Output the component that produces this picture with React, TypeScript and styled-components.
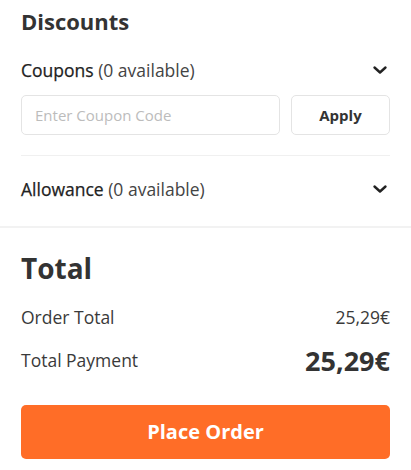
import React from "react";
import styled, { createGlobalStyle } from "styled-components";

const Global = createGlobalStyle`
  html, body { margin: 0; padding: 0; background: #fff; }
  body { font-family: "Open Sans", "Noto Sans", sans-serif; color: #333; }
  * { box-sizing: border-box; }
`;

const Page = styled.div`
  width: 411px;
  background: #fff;
`;

const Section = styled.section<{ $top: number; $bottom: number }>`
  padding: ${(p) => p.$top}px 21px ${(p) => p.$bottom}px;
`;

const Heading = styled.h2<{ $size: number }>`
  margin: 0;
  font-size: ${(p) => p.$size}px;
  font-weight: 700;
  line-height: 1.3;
  color: #333;
`;

const AccordionRow = styled.div<{ $mt?: number }>`
  display: flex;
  align-items: center;
  justify-content: space-between;
  height: 28px;
  margin-top: ${(p) => p.$mt ?? 0}px;
  cursor: pointer;
`;

const RowLabel = styled.div`
  font-size: 17.5px;
  color: #222;
  font-weight: 400;
  -webkit-text-stroke: 0.25px #222;
  span {
    -webkit-text-stroke: 0;
    color: #444;
  }
`;

const Chevron = styled.svg`
  width: 16px;
  height: 16px;
  margin-right: 2px;
`;

const CouponForm = styled.div`
  display: flex;
  gap: 11px;
  margin-top: 11px;
`;

const CouponInput = styled.input`
  flex: 1;
  min-width: 0;
  height: 40px;
  border: 1px solid #e4e4e4;
  border-radius: 5px;
  padding: 0 13px;
  font-family: inherit;
  font-size: 15px;
  color: #333;
  outline: none;
  &::placeholder { color: #bcbcbc; }
`;

const ApplyButton = styled.button`
  width: 99px;
  height: 40px;
  border: 1px solid #e4e4e4;
  border-radius: 5px;
  background: #fff;
  font-family: inherit;
  font-size: 15px;
  font-weight: 700;
  color: #333;
`;

const InnerDivider = styled.hr`
  border: 0;
  border-top: 1px solid #f0f0f0;
  margin: 20px 0 19px;
`;

const SectionDivider = styled.div`
  height: 2px;
  background: #f2f2f2;
`;

const TotalRow = styled.div<{ $mt: number }>`
  display: flex;
  align-items: center;
  justify-content: space-between;
  margin-top: ${(p) => p.$mt}px;
`;

const TotalLabel = styled.span`
  font-size: 17.5px;
  font-weight: 400;
  color: #3a3a3a;
`;

const TotalValue = styled.span<{ $big?: boolean }>`
  font-size: ${(p) => (p.$big ? 27 : 17.5)}px;
  font-weight: ${(p) => (p.$big ? 700 : 400)};
  color: ${(p) => (p.$big ? "#333" : "#3a3a3a")};
`;

const PlaceOrder = styled.button`
  width: 100%;
  height: 54px;
  margin-top: 26px;
  border: 0;
  border-radius: 5px;
  background: #ff6d27;
  color: #fff;
  font-family: inherit;
  font-size: 20px;
  font-weight: 700;
`;

const ChevronIcon = () => (
  <Chevron viewBox="0 0 16 16" fill="none">
    <path d="M2.5 5.5 L8 10.5 L13.5 5.5" stroke="#222" strokeWidth="2.4" strokeLinecap="round" strokeLinejoin="round" />
  </Chevron>
);

export default function App() {
  return (
    <Page>
      <Global />
      <Section $top={7} $bottom={23}>
        <Heading $size={22}>Discounts</Heading>
        <AccordionRow $mt={20}>
          <RowLabel>
            Coupons <span>(0 available)</span>
          </RowLabel>
          <ChevronIcon />
        </AccordionRow>
        <CouponForm>
          <CouponInput placeholder="Enter Coupon Code" />
          <ApplyButton>Apply</ApplyButton>
        </CouponForm>
        <InnerDivider />
        <AccordionRow>
          <RowLabel>
            Allowance <span>(0 available)</span>
          </RowLabel>
          <ChevronIcon />
        </AccordionRow>
      </Section>
      <SectionDivider />
      <Section $top={22} $bottom={10}>
        <Heading $size={28}>Total</Heading>
        <TotalRow $mt={19}>
          <TotalLabel>Order Total</TotalLabel>
          <TotalValue>25,29€</TotalValue>
        </TotalRow>
        <TotalRow $mt={13}>
          <TotalLabel>Total Payment</TotalLabel>
          <TotalValue $big>25,29€</TotalValue>
        </TotalRow>
        <PlaceOrder>Place Order</PlaceOrder>
      </Section>
    </Page>
  );
}
